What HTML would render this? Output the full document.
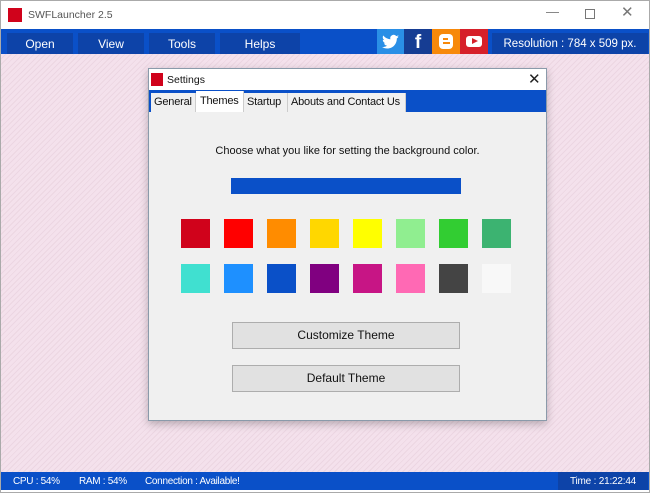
<!DOCTYPE html>
<html><head><style>
*{margin:0;padding:0;box-sizing:border-box}
body{width:650px;height:493px;overflow:hidden;font-family:"Liberation Sans",sans-serif;background:#fff;position:relative}
.abs{position:absolute;white-space:nowrap}
.win{left:0;top:0;width:650px;height:493px;border:1px solid #aaa}
.bg{left:1px;top:54px;width:648px;height:418px;background:repeating-linear-gradient(135deg,#f4e1ec 0 3px,#ecd6e2 3px 4px)}
.menu{left:1px;top:29px;width:648px;height:25px;background:#0a50c8}
.mi{top:33px;height:21px;background:#0d43a8;color:#fff;font-size:12px;text-align:center;line-height:22px}
.status{left:1px;top:472px;width:648px;height:18px;background:#0a50c8}
.sw{width:29px;height:29px}
.btn{left:232px;width:228px;height:27px;background:#e1e1e1;border:1px solid #adadad;font-size:12px;text-align:center;line-height:25px;color:#111}
.tab{top:93px;height:19px;background:#f0f0f0;font-size:11px;line-height:19px;padding:0 3px;border-right:1px solid #ccc;color:#111;letter-spacing:-0.2px}
</style></head><body>
<div class="abs win"></div>
<div class="abs" style="left:8px;top:8px;width:14px;height:14px;background:#d0021b"></div>
<div class="abs" style="left:28px;top:9px;font-size:10.5px;color:#555">SWFLauncher 2.5</div>
<div class="abs" style="left:546px;top:4px;font-size:13px;color:#777">&#8212;</div>
<div class="abs" style="left:585px;top:9px;width:10px;height:10px;border:1px solid #777"></div>
<div class="abs" style="left:621px;top:3px;font-size:15px;color:#777">&#10005;</div>
<div class="abs bg"></div>
<div class="abs menu"></div>
<div class="abs mi" style="left:7px;width:66px">Open</div>
<div class="abs mi" style="left:78px;width:66px">View</div>
<div class="abs mi" style="left:149px;width:66px">Tools</div>
<div class="abs mi" style="left:220px;width:80px">Helps</div>
<div class="abs" style="left:377px;top:29px;width:27px;height:25px;background:#2a8fe6"><svg width="27" height="25" viewBox="0 0 27 25"><path d="M22 7.5c-.6.3-1.3.5-2 .6.7-.4 1.2-1.1 1.5-1.9-.7.4-1.4.7-2.2.9a3.4 3.4 0 0 0-5.9 3.1C10.600 10 8 8.700 6.300 6.500c-1 1.600-.5 3.600 1 4.600-.6 0-1.100-.2-1.500-.4 0 1.700 1.200 3.100 2.700 3.400-.5.100-1 .2-1.500.1.400 1.400 1.700 2.400 3.200 2.400A6.900 6.900 0 0 1 5 18c1.500 1 3.300 1.500 5.200 1.500 6.300 0 9.800-5.300 9.600-10 .7-.5 1.300-1.100 1.700-1.800z" fill="#fff"/></svg></div>
<div class="abs" style="left:404px;top:29px;width:28px;height:25px;background:#163d93;color:#fff;font-weight:bold;font-size:19px;text-align:center;line-height:27px">f</div>
<div class="abs" style="left:432px;top:29px;width:28px;height:25px;background:#f7890a"><div class="abs" style="left:7px;top:5px;width:14px;height:15px;background:#fff;border-radius:4px"></div><div class="abs" style="left:11px;top:9px;width:5px;height:2px;background:#f7890a"></div><div class="abs" style="left:11px;top:13px;width:7px;height:2px;background:#f7890a"></div></div>
<div class="abs" style="left:460px;top:29px;width:28px;height:25px;background:#d6202a"><div class="abs" style="left:6px;top:7px;width:16px;height:11px;background:#fff;border-radius:3px"></div><div class="abs" style="left:12px;top:9px;border-left:6px solid #d6202a;border-top:3.5px solid transparent;border-bottom:3.5px solid transparent"></div></div>
<div class="abs mi" style="left:492px;width:156px;top:33px;font-size:11.5px">Resolution : 784 x 509 px.</div>

<div class="abs" style="left:148px;top:68px;width:399px;height:353px;background:#f0f0f0;border:1px solid #8a9aaa;box-shadow:0 3px 8px rgba(0,0,0,.25)"></div>
<div class="abs" style="left:149px;top:69px;width:397px;height:21px;background:#fff"></div>
<div class="abs" style="left:151px;top:73px;width:12px;height:13px;background:#d0021b"></div>
<div class="abs" style="left:167px;top:74px;font-size:10.5px;color:#111">Settings</div>
<div class="abs" style="left:528px;top:70px;font-size:15px;color:#222">&#10005;</div>
<div class="abs" style="left:149px;top:90px;width:397px;height:22px;background:#0a50c8"></div>
<div class="abs tab" style="left:151px;width:45px">General</div>
<div class="abs tab" style="left:196px;top:91px;height:21px;background:#fff;width:48px;padding:0 4px;line-height:21px">Themes</div>
<div class="abs tab" style="left:244px;width:44px">Startup</div>
<div class="abs tab" style="left:288px;width:118px">Abouts and Contact Us</div>
<div class="abs" style="left:149px;top:145px;width:397px;text-align:center;font-size:11px;color:#111">Choose what you like for setting the background color.</div>
<div class="abs" style="left:231px;top:178px;width:230px;height:16px;background:#0a50c8"></div>

<div class="abs sw" style="left:181px;top:219px;background:#d0021b"></div>
<div class="abs sw" style="left:224px;top:219px;background:#ff0000"></div>
<div class="abs sw" style="left:267px;top:219px;background:#ff8c00"></div>
<div class="abs sw" style="left:310px;top:219px;background:#ffd700"></div>
<div class="abs sw" style="left:353px;top:219px;background:#ffff00"></div>
<div class="abs sw" style="left:396px;top:219px;background:#90ee90"></div>
<div class="abs sw" style="left:439px;top:219px;background:#32cd32"></div>
<div class="abs sw" style="left:482px;top:219px;background:#3cb371"></div>
<div class="abs sw" style="left:181px;top:264px;background:#40e0d0"></div>
<div class="abs sw" style="left:224px;top:264px;background:#1e90ff"></div>
<div class="abs sw" style="left:267px;top:264px;background:#0a50c8"></div>
<div class="abs sw" style="left:310px;top:264px;background:#800080"></div>
<div class="abs sw" style="left:353px;top:264px;background:#c71585"></div>
<div class="abs sw" style="left:396px;top:264px;background:#ff69b4"></div>
<div class="abs sw" style="left:439px;top:264px;background:#444"></div>
<div class="abs sw" style="left:482px;top:264px;background:#f8f8f8"></div>

<div class="abs btn" style="top:322px">Customize Theme</div>
<div class="abs btn" style="top:365px">Default Theme</div>

<div class="abs status"></div>
<div class="abs" style="left:13px;top:473px;color:#fff;font-size:10px;line-height:18px;letter-spacing:-0.3px">CPU : 54%</div>
<div class="abs" style="left:79px;top:473px;color:#fff;font-size:10px;line-height:18px;letter-spacing:-0.3px">RAM : 54%</div>
<div class="abs" style="left:145px;top:473px;color:#fff;font-size:10px;line-height:18px;letter-spacing:-0.3px">Connection : Available!</div>
<div class="abs" style="left:558px;top:472px;width:90px;height:18px;background:#0d43a8;color:#fff;font-size:10px;line-height:19px;text-align:center;letter-spacing:-0.2px">Time : 21:22:44</div>
</body></html>
